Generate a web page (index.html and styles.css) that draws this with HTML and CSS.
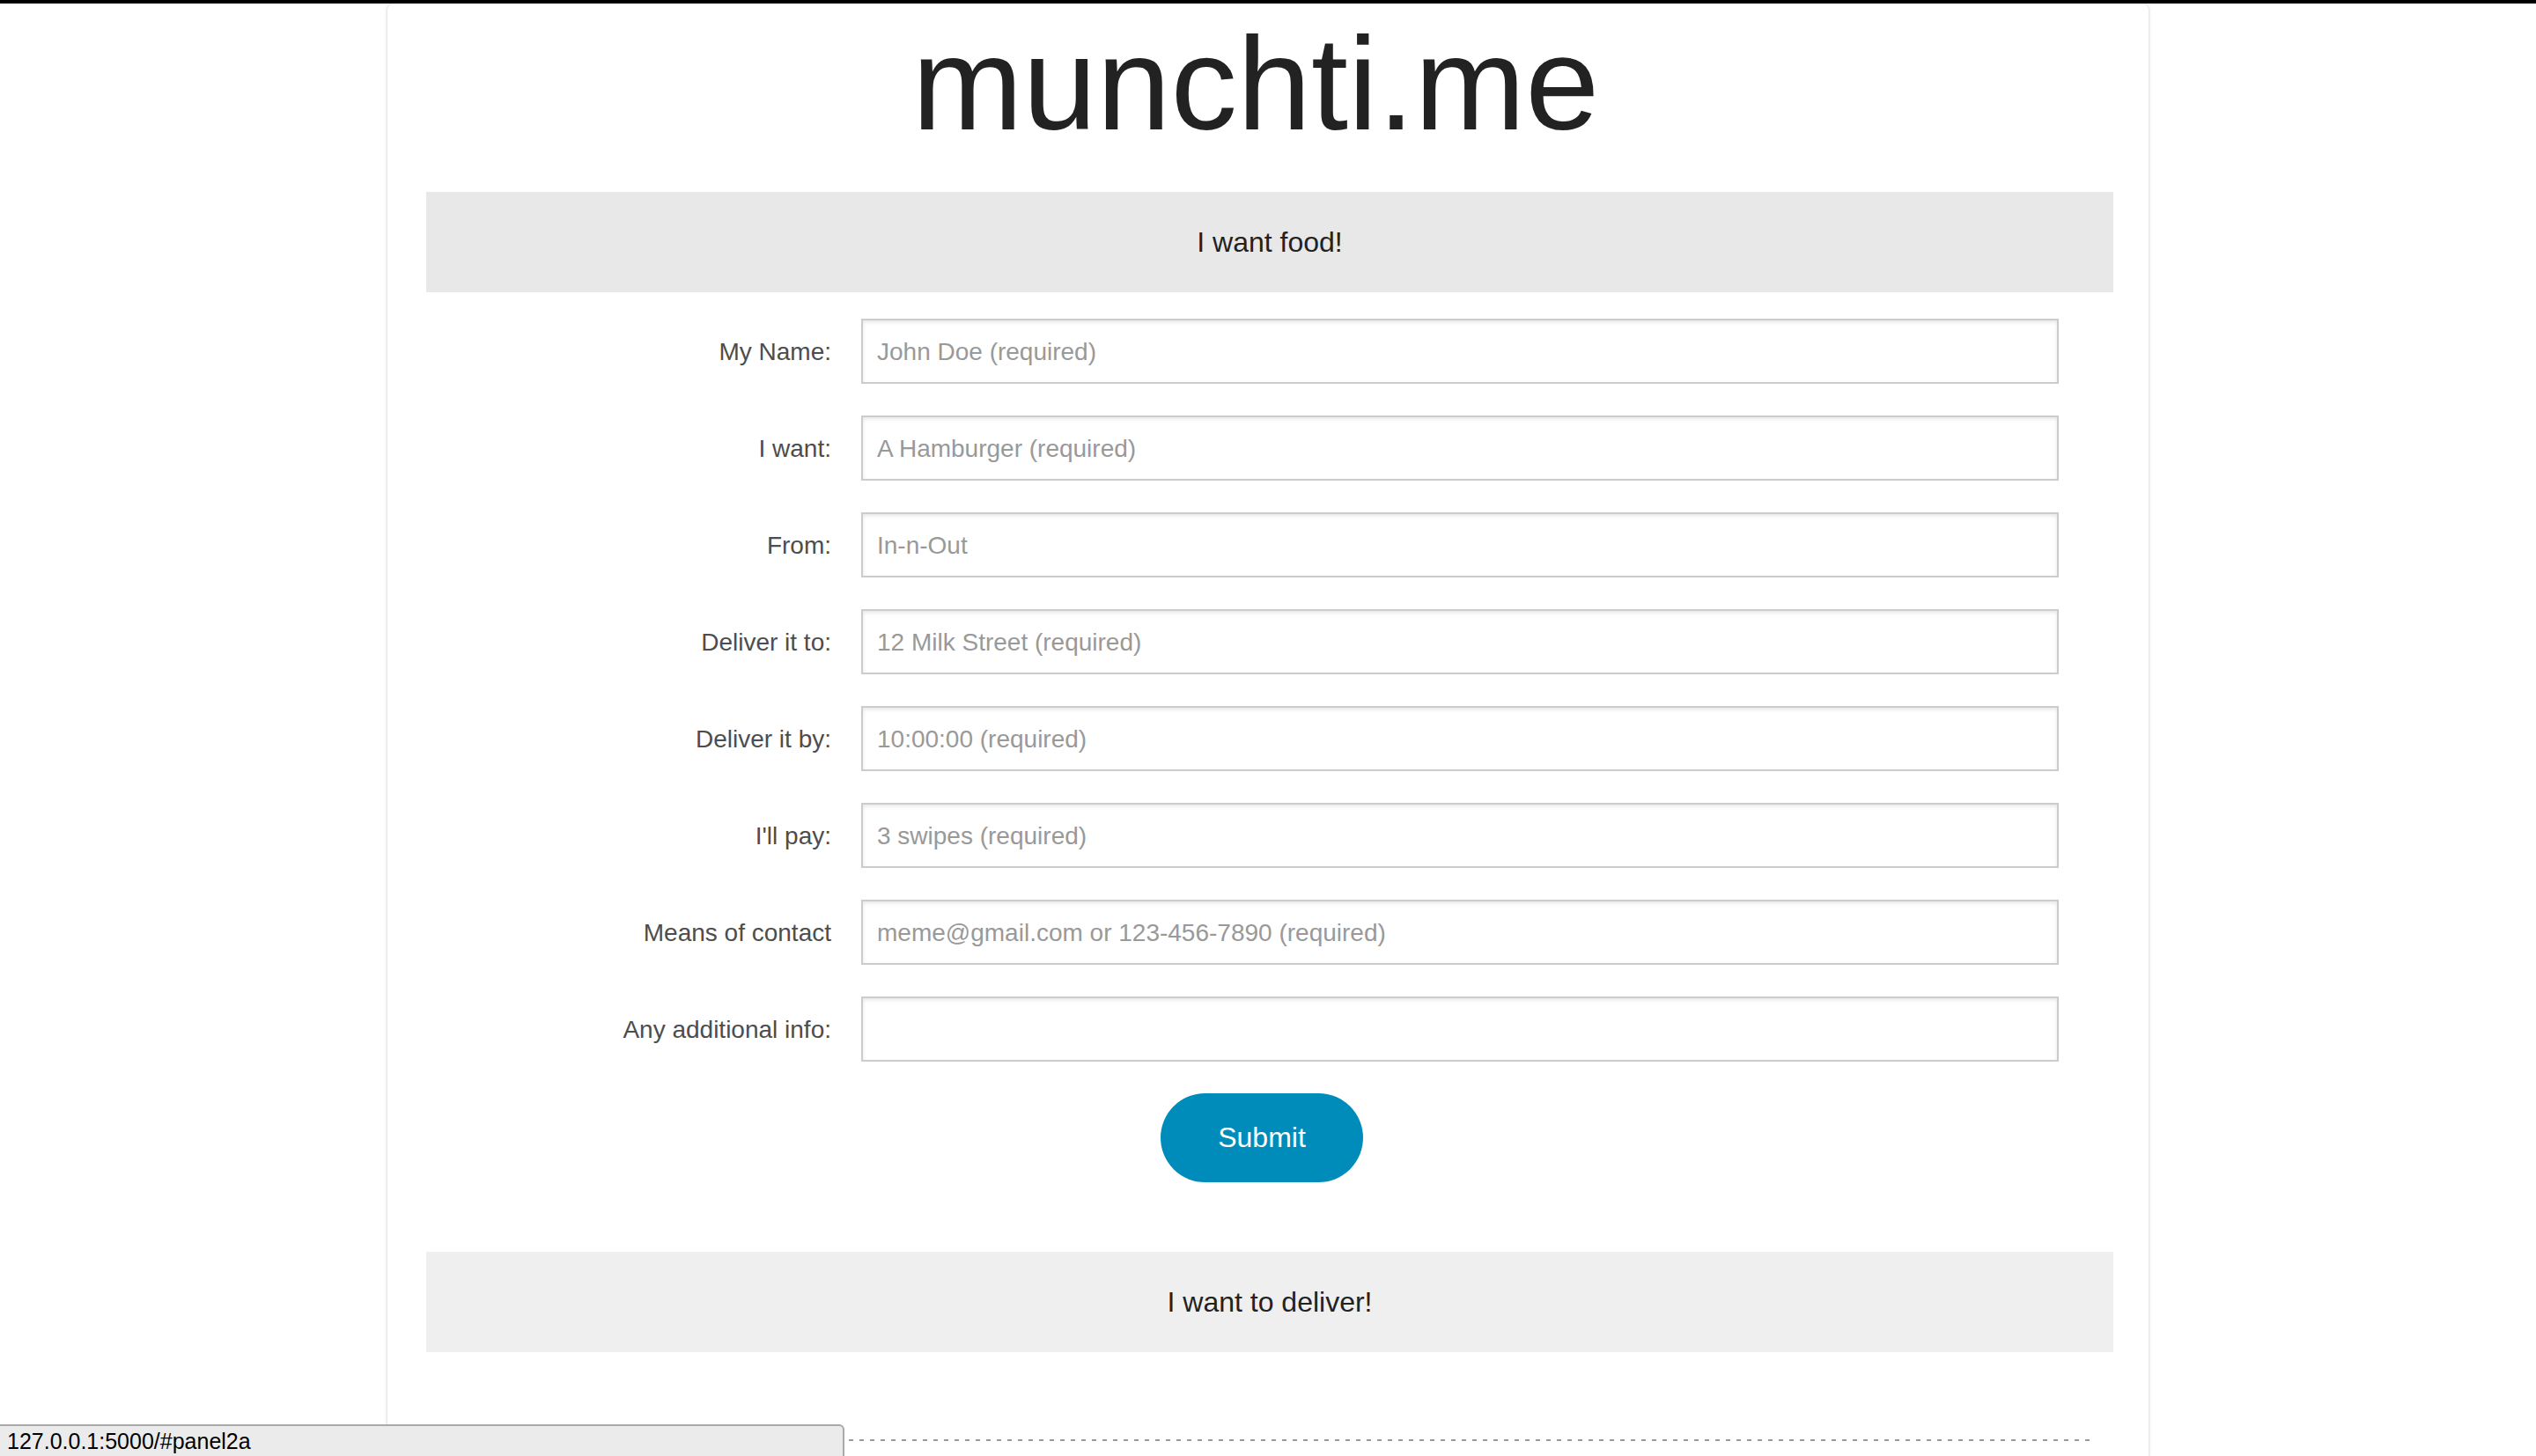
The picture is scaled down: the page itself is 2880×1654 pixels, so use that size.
FILE: index.html
```html
<!DOCTYPE html>
<html lang="en">
<head>
<meta charset="utf-8">
<title>munchti.me</title>
<link rel="stylesheet" href="styles.css">
</head>
<body>
<div class="topbar"></div>
<main class="card">
  <h1 class="title">munchti.me</h1>

  <section class="accordion-item">
    <a class="accordion-head active" href="#panel1a">I want food!</a>
    <form class="order-form">
      <div class="form-row">
        <label class="form-label" for="f-name">My Name:</label>
        <input class="form-input" id="f-name" type="text" placeholder="John Doe (required)">
      </div>
      <div class="form-row">
        <label class="form-label" for="f-want">I want:</label>
        <input class="form-input" id="f-want" type="text" placeholder="A Hamburger (required)">
      </div>
      <div class="form-row">
        <label class="form-label" for="f-from">From:</label>
        <input class="form-input" id="f-from" type="text" placeholder="In-n-Out">
      </div>
      <div class="form-row">
        <label class="form-label" for="f-to">Deliver it to:</label>
        <input class="form-input" id="f-to" type="text" placeholder="12 Milk Street (required)">
      </div>
      <div class="form-row">
        <label class="form-label" for="f-by">Deliver it by:</label>
        <input class="form-input" id="f-by" type="text" placeholder="10:00:00 (required)">
      </div>
      <div class="form-row">
        <label class="form-label" for="f-pay">I'll pay:</label>
        <input class="form-input" id="f-pay" type="text" placeholder="3 swipes (required)">
      </div>
      <div class="form-row">
        <label class="form-label" for="f-contact">Means of contact</label>
        <input class="form-input" id="f-contact" type="text" placeholder="meme@gmail.com or 123-456-7890 (required)">
      </div>
      <div class="form-row">
        <label class="form-label" for="f-info">Any additional info:</label>
        <input class="form-input" id="f-info" type="text">
      </div>
      <div class="submit-row">
        <button class="btn-round" type="button">Submit</button>
      </div>
    </form>
  </section>

  <section class="accordion-item">
    <a class="accordion-head" href="#panel2a">I want to deliver!</a>
  </section>

  <div class="dotted-rule"></div>
</main>

<div class="status-bar">127.0.0.1:5000/#panel2a</div>
</body>
</html>
```

FILE: styles.css
```css
html, body {
  margin: 0;
  padding: 0;
  background: #ffffff;
}

body {
  font-family: "Liberation Sans", Arial, Helvetica, sans-serif;
  color: #222222;
  height: 1654px;
  overflow: hidden;
}

.topbar {
  height: 4px;
  background: #000000;
}

.card {
  width: 2000px;
  box-sizing: border-box;
  margin: 0 auto;
  min-height: 1650px;
  padding: 0 40px 0 44px;
  background: #ffffff;
  border-radius: 8px 8px 0 0;
  box-shadow: 0 0 3px 1px rgba(0, 0, 0, 0.14);
}

.title {
  margin: 0;
  padding: 5px 32px 0 0;
  font-size: 151px;
  line-height: 171px;
  font-weight: normal;
  text-align: center;
  color: #222222;
}

.accordion-item {
  display: block;
}

.title + .accordion-item {
  margin-top: 38px;
}

.accordion-head {
  display: block;
  height: 114px;
  line-height: 114px;
  font-size: 32px;
  text-align: center;
  color: #222222;
  text-decoration: none;
  background: #efefef;
}

.accordion-head.active {
  background: #e8e8e8;
}

.order-form {
  padding: 30px 0 79px 0;
  display: flex;
  flex-direction: column;
  gap: 36px;
}

.form-row {
  display: grid;
  grid-template-columns: 460px 1360px;
  column-gap: 34px;
  align-items: center;
}

.form-label {
  text-align: right;
  font-size: 28px;
  color: #4d4d4d;
  line-height: 34px;
  padding-top: 2px;
}

.form-input {
  box-sizing: border-box;
  height: 74px;
  width: 100%;
  margin: 0;
  padding: 2px 16px 0 16px;
  border: 2px solid #cccccc;
  border-radius: 0;
  background: #ffffff;
  box-shadow: inset 0 2px 4px rgba(0, 0, 0, 0.1);
  font-family: "Liberation Sans", Arial, Helvetica, sans-serif;
  font-size: 28px;
  color: rgba(0, 0, 0, 0.75);
  outline: none;
}

.form-input::placeholder {
  color: #999999;
  opacity: 1;
}

.submit-row {
  display: flex;
  justify-content: center;
  padding-right: 18px;
}

.btn-round {
  height: 101px;
  width: 230px;
  padding: 0;
  border: none;
  border-radius: 1000px;
  background: #008cba;
  color: #ffffff;
  font-family: "Liberation Sans", Arial, Helvetica, sans-serif;
  font-size: 32px;
  cursor: pointer;
}

.dotted-rule {
  margin: 99px 20px 0 0;
  height: 2px;
  background: repeating-linear-gradient(to right, #9a9a9a 0 5px, transparent 5px 12px);
}

.status-bar {
  position: fixed;
  left: 0;
  bottom: 0;
  width: 959px;
  height: 36px;
  box-sizing: border-box;
  padding: 2px 0 0 8px;
  background: #ebebeb;
  border-top: 2px solid #a9a9a9;
  border-right: 2px solid #a9a9a9;
  border-top-right-radius: 6px;
  font-family: "Liberation Sans", Arial, sans-serif;
  font-size: 25px;
  line-height: 30px;
  color: #000000;
}
```
